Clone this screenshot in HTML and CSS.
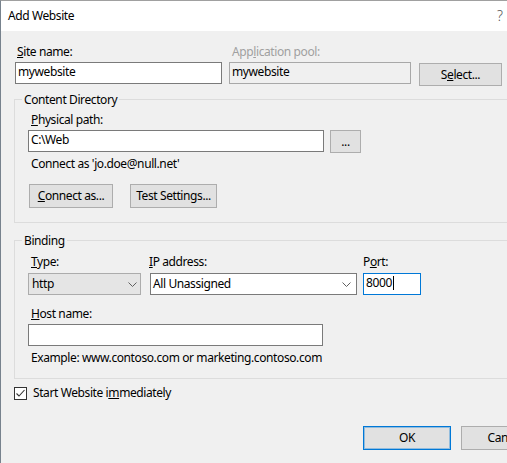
FILE: index.html
```html
<!DOCTYPE html>
<html lang="en">
<head>
<meta charset="utf-8">
<title>Add Website</title>
<link rel="stylesheet" href="styles.css">
</head>
<body>
<div class="dialog">
  <div class="titlebar">
    <span class="title">Add Website</span>
    <span class="help">?</span>
  </div>
  <div class="content">
    <div class="site-row">
      <div class="field field-name">
        <label class="lbl"><u>S</u>ite name:</label>
        <div class="textbox">mywebsite</div>
      </div>
      <div class="field field-pool">
        <label class="lbl lbl-pool disabled">App<u>l</u>ication pool:</label>
        <div class="textbox readonly">mywebsite</div>
      </div>
      <div class="field field-select">
        <span class="lbl-spacer"></span>
        <button class="btn btn-select">S<u>e</u>lect...</button>
      </div>
    </div>

    <fieldset class="group group-content">
      <legend>Content Directory</legend>
      <div class="group-body">
        <label class="lbl lbl-in"><u>P</u>hysical path:</label>
        <div class="path-row">
          <div class="textbox path">C:\Web</div>
          <button class="btn btn-browse">...</button>
        </div>
        <p class="note">Connect as 'jo.doe@null.net'</p>
        <div class="btn-row">
          <button class="btn btn-connect"><u>C</u>onnect as...</button>
          <button class="btn btn-test">Test Settings...</button>
        </div>
      </div>
    </fieldset>

    <fieldset class="group group-binding">
      <legend>Binding</legend>
      <div class="group-body">
        <div class="binding-row">
          <div class="field field-type">
            <label class="lbl lbl-in"><u>T</u>ype:</label>
            <div class="combo combo-list">
              <span>http</span>
              <svg class="chev" width="9" height="5" viewBox="0 0 9 5"><path d="M0.5 0.5 L4.5 4.5 L8.5 0.5" fill="none" stroke="#606060" stroke-width="1"/></svg>
            </div>
          </div>
          <div class="field field-ip">
            <label class="lbl lbl-ip"><u>I</u>P address:</label>
            <div class="combo combo-edit">
              <span>All Unassigned</span>
              <svg class="chev" width="9" height="5" viewBox="0 0 9 5"><path d="M0.5 0.5 L4.5 4.5 L8.5 0.5" fill="none" stroke="#606060" stroke-width="1"/></svg>
            </div>
          </div>
          <div class="field field-port">
            <label class="lbl lbl-port">P<u>o</u>rt:</label>
            <div class="textbox port focused">8000<span class="caret"></span></div>
          </div>
        </div>
        <label class="lbl lbl-in lbl-host"><u>H</u>ost name:</label>
        <div class="textbox host"></div>
        <p class="note">Example: www.contoso.com or marketing.contoso.com</p>
      </div>
    </fieldset>

    <div class="check-row">
      <svg class="checkbox" width="13" height="13" viewBox="0 0 13 13"><rect x="0.5" y="0.5" width="12" height="12" fill="#fff" stroke="#333"/><path d="M2.5 6.5 L5 9 L10.5 3" fill="none" stroke="#333" stroke-width="1.1"/></svg>
      <span class="check-label">Start Website i<u>m</u>mediately</span>
    </div>

    <div class="footer">
      <button class="btn btn-footer btn-default">OK</button>
      <button class="btn btn-footer">Cancel</button>
    </div>
  </div>
</div>
</body>
</html>
```

FILE: styles.css
```css
* {
  box-sizing: border-box;
}

html,
body {
  margin: 0;
  padding: 0;
  overflow: hidden;
  background: #f0f0f0;
}

body {
  font-family: "Noto Sans", "Open Sans", sans-serif;
  font-size: 12px;
  line-height: 16px;
  letter-spacing: -0.4px;
  color: #000;
}

.dialog {
  width: 570px;
  height: 480px;
  border-top: 1px solid #a0a0a0;
  border-left: 1px solid #77828d;
  background: #f0f0f0;
}

.titlebar {
  height: 30px;
  background: #fff;
  display: flex;
  align-items: center;
  padding-left: 7px;
}

.title {
  flex: 1;
}

.help {
  width: 8px;
  margin-right: 65px;
  font-size: 14px;
  font-weight: 300;
  color: #555;
  letter-spacing: 0;
}

.content {
  padding: 13px 21px 0 13px;
}

/* first row */
.site-row {
  display: flex;
  margin-left: 1px;
}

.field {
  display: flex;
  flex-direction: column;
}

.field-name {
  width: 207px;
}

.field-pool {
  width: 182px;
  margin-left: 7px;
}

.field-select {
  width: 83px;
  margin-left: 8px;
}

.lbl {
  display: block;
  height: 16px;
  padding-left: 2px;
  margin-bottom: 2px;
  white-space: nowrap;
}

.lbl-pool {
  padding-left: 3px;
}

.lbl-spacer {
  display: block;
  height: 19px;
}

.disabled {
  color: #a0a0a0;
}

.textbox {
  height: 22px;
  border: 1px solid #7a7a7a;
  background: #fff;
  padding: 0 0 0 2px;
  line-height: 17px;
  white-space: nowrap;
  overflow: hidden;
}

.textbox.readonly {
  background: #f0f0f0;
  border-color: #a8a8a8;
}

.btn {
  font-family: inherit;
  font-size: 12px;
  letter-spacing: -0.4px;
  color: #000;
  background: #e1e1e1;
  border: 1px solid #adadad;
  padding: 0;
  margin: 0;
  line-height: 16px;
  white-space: nowrap;
}

.btn-select {
  width: 83px;
  height: 23px;
}

/* group boxes */
.group {
  margin: 5px 0 0 0;
  padding: 4px 0 14px 7px;
  border: 1px solid #dcdcdc;
  min-width: 0;
}

.group legend {
  padding: 0 2px;
  line-height: 17px;
  height: 17px;
}

.group-body {
  margin-left: 6px;
}

.lbl-in {
  padding-left: 3px;
}

.path-row {
  display: flex;
}

.textbox.path {
  width: 296px;
}

.btn-browse {
  width: 31px;
  height: 23px;
  margin-left: 6px;
}

.note {
  margin: 3px 0 0 0;
  padding-left: 3px;
  white-space: nowrap;
}

.btn-row {
  display: flex;
  margin-top: 12px;
}

.btn-connect {
  width: 84px;
  height: 24px;
  margin-left: 1px;
}

.btn-test {
  width: 87px;
  height: 24px;
  margin-left: 17px;
}

/* binding */
.group-binding {
  margin-top: 9px;
  padding: 5px 0 12px 7px;
}

.binding-row {
  display: flex;
}

.binding-row .lbl {
  margin-bottom: 3px;
}

.field-type {
  width: 113px;
}

.field-ip {
  width: 207px;
  margin-left: 9px;
}

.field-port {
  width: 58px;
  margin-left: 6px;
}

.lbl-ip {
  padding-left: 0;
  margin-left: -1px;
}

.lbl-port {
  padding-left: 0;
}

.combo {
  height: 22px;
  display: flex;
  align-items: center;
  justify-content: space-between;
  line-height: 18px;
  white-space: nowrap;
}

.combo-list {
  background: #e5e5e5;
  border: 1px solid #acacac;
  padding: 0 3px 0 3px;
}

.combo-edit {
  background: #fff;
  border: 1px solid #7a7a7a;
  padding: 0 5px 0 2px;
}

.chev {
  display: block;
  flex: none;
}

.textbox.port {
  line-height: 18px;
}

.textbox.focused {
  border-color: #0078d7;
}

.caret {
  display: inline-block;
  width: 1px;
  height: 14px;
  background: #000;
  vertical-align: -3px;
  margin-left: 1px;
}

.lbl-host {
  margin-top: 11px;
}

.textbox.host {
  width: 295px;
}

.group-binding .note {
  margin-top: 4px;
}

/* checkbox */
.check-row {
  display: flex;
  align-items: center;
  height: 16px;
  margin-top: 6px;
}

.checkbox {
  display: block;
  flex: none;
}

.check-label {
  margin-left: 6px;
  white-space: nowrap;
}

/* footer */
.footer {
  display: flex;
  justify-content: flex-end;
  gap: 10px;
  margin-top: 25px;
}

.btn-footer {
  width: 88px;
  height: 24px;
}

.btn-default {
  border-color: #0078d7;
  box-shadow: inset 0 0 0 1px rgba(0, 120, 215, 0.35);
}
```
